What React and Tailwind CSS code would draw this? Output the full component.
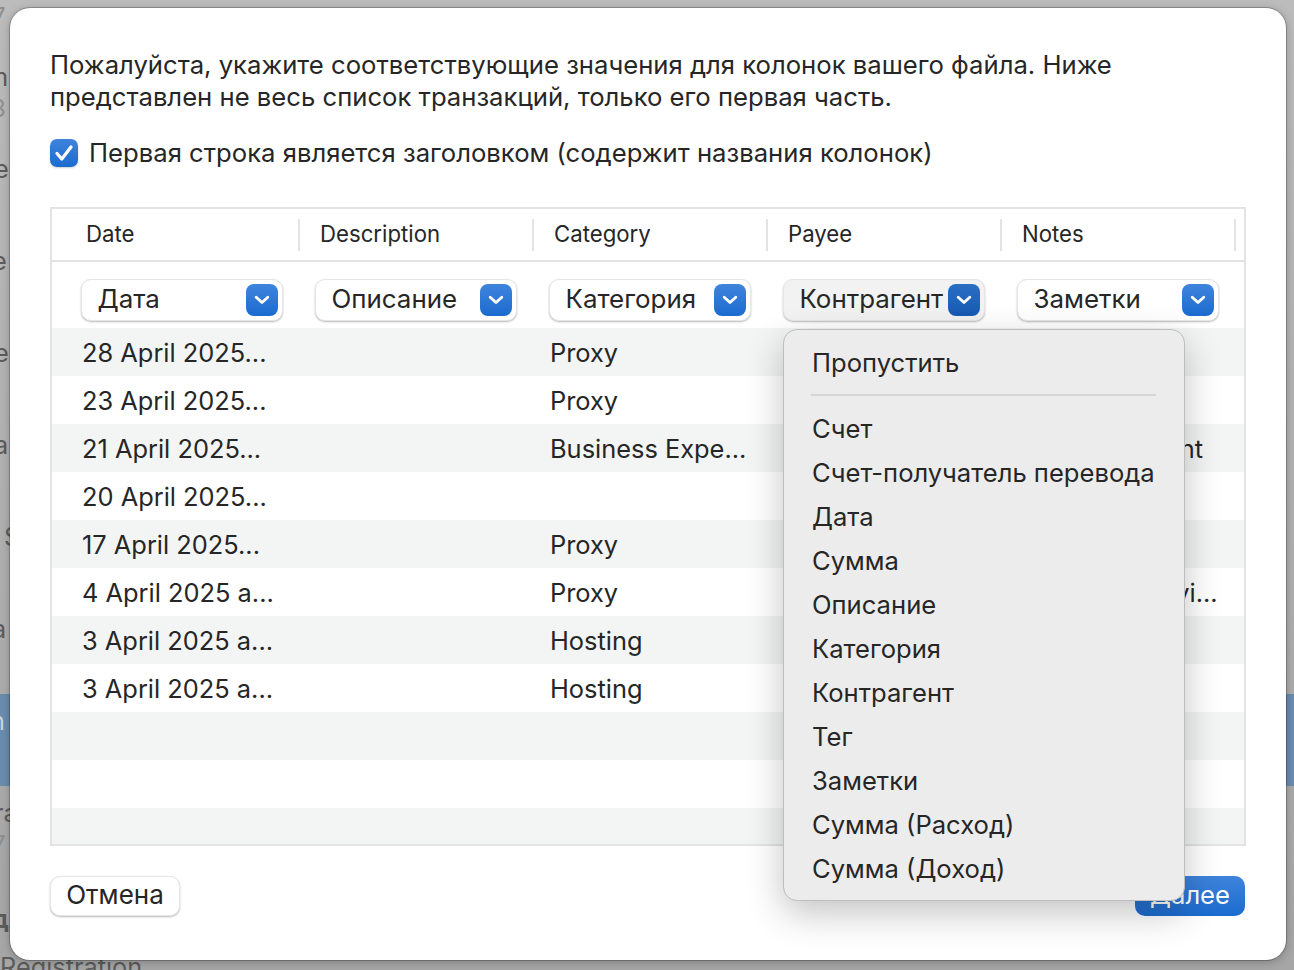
import React from "react";

const Chevron = () => (
  <svg width="16" height="10" viewBox="0 0 16 10" fill="none">
    <path d="M2.2 2.2 8 7.6l5.8-5.4" stroke="white" strokeWidth="2.8" strokeLinecap="round" strokeLinejoin="round" />
  </svg>
);

function Select({ label, active, children }) {
  return (
    <div className={`relative w-[202px] h-[42px] rounded-[10px] flex items-center pl-[17px] text-[25.9px] leading-[32px] text-[#262626] border border-[#e6e6e6] shadow-[0_1px_2px_rgba(0,0,0,0.28)] ${active ? "bg-[#f2f2f2]" : "bg-white"}`}>
      <span className="whitespace-nowrap -ml-[1.5px] pb-[2px]">{label}</span>
      <span className={`absolute right-[4px] top-[4px] w-[32px] h-[32px] rounded-[8px] flex items-center justify-center ${active ? "bg-gradient-to-b from-[#2a6fc4] to-[#1559b2]" : "bg-gradient-to-b from-[#3e84dc] to-[#1a6bcf]"}`}>
        <Chevron />
      </span>
      {children}
    </div>
  );
}

const menuItems = ["Счет", "Счет-получатель перевода", "Дата", "Сумма", "Описание", "Категория", "Контрагент", "Тег", "Заметки", "Сумма (Расход)", "Сумма (Доход)"];

function Menu() {
  return (
    <div className="absolute z-20 left-[-1px] top-[49px] w-[402px] h-[572px] bg-[#ececec] rounded-[14px] border border-[#bdbdbd] shadow-[0_12px_36px_rgba(0,0,0,0.24)] pt-[11px] text-[25.6px] text-[#262626]">
      <div className="h-[44px] leading-[44px] pl-[28px] whitespace-nowrap">Пропустить</div>
      <div className="h-[2px] bg-[#d5d5d5] mt-[9px] mb-[11px] ml-[27px] mr-[28px]" />
      {menuItems.map((m) => (
        <div key={m} className="h-[44px] leading-[44px] pl-[28px] whitespace-nowrap">{m}</div>
      ))}
    </div>
  );
}

const rows = [
  ["28 April 2025...", "Proxy", ""],
  ["23 April 2025...", "Proxy", ""],
  ["21 April 2025...", "Business Expe...", "Media payment"],
  ["20 April 2025...", "", ""],
  ["17 April 2025...", "Proxy", ""],
  ["4 April 2025 a...", "Proxy", "Proxy tos servi..."],
  ["3 April 2025 a...", "Hosting", ""],
  ["3 April 2025 a...", "Hosting", ""],
  ["", "", ""],
  ["", "", ""],
  ["", "", ""],
];

const headers = ["Date", "Description", "Category", "Payee", "Notes"];

const backRows = [
  { title: "", sub: "7", subShift: "-ml-[8px]" },
  { title: "m", sub: "8", shift: "-ml-[14px]", subShift: "-ml-[9px]" },
  { title: "e", shift: "-ml-[6px]" },
  { title: "e", shift: "-ml-[8px]" },
  { title: "e", shift: "-ml-[6px]" },
  { title: "a", shift: "-ml-[6px]" },
  { title: "S", shift: "ml-[4px]" },
  { title: "a", shift: "-ml-[8px]" },
  { title: "n", shift: "-ml-[10px]", blue: true },
  { title: "ra", sub: "7", shift: "-ml-[6px]", subShift: "-ml-[8px]" },
];

function BackRow({ title, sub, shift, subShift, blue }) {
  return (
    <div className={`h-[92px] shrink-0 pt-[11px] text-[25.3px] leading-[32px] whitespace-nowrap ${blue ? "bg-[#6a8cae] text-[#c9d5e1]" : "text-[#5c5c5c]"}`}>
      <div className={`h-[32px] ${shift || ""}`}>{title}</div>
      <div className={`h-[32px] text-[24px] text-[#8f8f8f] ${subShift || ""}`}>{sub}</div>
    </div>
  );
}

export default function App() {
  return (
    <div className="relative w-[1294px] h-[970px] overflow-hidden bg-gradient-to-b from-[#bcbcbc] to-[#a6a6a6] [font-family:Inter,'Noto_Sans',sans-serif]">
      {/* dimmed window behind the dialog */}
      <div className="absolute inset-0 flex flex-col -mt-[42px] overflow-hidden">
        {backRows.map((r, i) => (
          <BackRow key={i} {...r} />
        ))}
        <div className="border-t border-[#a9a9a9] pt-[24px] text-[25.3px] leading-[32px] text-[#5c5c5c]">
          <div className="-ml-[8px] font-bold h-[48px]">д</div>
          <div>Registration</div>
        </div>
      </div>

      {/* dialog */}
      <div className="relative z-10 ml-[10px] mt-[8px] w-[1276px] h-[952px] bg-white rounded-[20px] shadow-[0_0_0_1px_rgba(0,0,0,0.22),0_2px_10px_rgba(0,0,0,0.25)] pt-[41px] pl-[40px] pr-[40px]">
        <p className="text-[25.66px] leading-[32px] text-[#262626] w-[1196px] whitespace-nowrap">
          Пожалуйста, укажите соответствующие значения для колонок вашего файла. Ниже<br />
          представлен не весь список транзакций, только его первая часть.
        </p>

        <div className="flex items-center mt-[24px] h-[32px]">
          <span className="w-[28px] h-[28px] rounded-[7px] bg-gradient-to-b from-[#3e84dc] to-[#1a6bcf] shadow-[0_1px_2px_rgba(0,0,0,0.2)] flex items-center justify-center">
            <svg width="20" height="18" viewBox="0 0 20 18" fill="none">
              <path d="M3 9.5 7.8 15 17 3" stroke="white" strokeWidth="3.2" strokeLinecap="round" strokeLinejoin="round" />
            </svg>
          </span>
          <span className="ml-[11px] text-[25.66px] leading-[32px] text-[#262626] whitespace-nowrap">
            Первая строка является заголовком (содержит названия колонок)
          </span>
        </div>

        {/* table */}
        <div className="mt-[38px] w-[1196px] h-[639px] border-2 border-[#e3e3e3] relative">
          <div className="flex h-[53px] border-b-2 border-[#e3e3e3] items-center">
            {headers.map((h, i) => (
              <div key={h} className={`h-[32px] flex items-center border-r-2 border-[#e3e3e3] text-[22.2px] text-[#262626] pb-[2px] ${i === 0 ? "w-[248px] pl-[34px]" : "w-[234px] pl-[20px]"}`}>
                {h}
              </div>
            ))}
          </div>
          <div className="flex h-[66px] items-start pt-[17px]">
            <div className="w-[248px] pl-[29px]"><Select label="Дата" /></div>
            <div className="w-[234px] pl-[15px]"><Select label="Описание" /></div>
            <div className="w-[234px] pl-[15px]"><Select label="Категория" /></div>
            <div className="w-[234px] pl-[15px]"><Select label="Контрагент" active><Menu /></Select></div>
            <div className="w-[234px] pl-[15px]"><Select label="Заметки" /></div>
          </div>
          {rows.map((r, i) => (
            <div key={i} className={`flex items-center text-[25.4px] text-[#262626] whitespace-nowrap pt-[2px] ${i === 10 ? "h-[36px]" : "h-[48px]"} ${i % 2 === 0 ? "bg-[#f3f5f5]" : "bg-white"}`}>
              <div className="w-[248px] pl-[30px]">{r[0]}</div>
              <div className="w-[234px]" />
              <div className="w-[234px] pl-[16px]">{r[1]}</div>
              <div className="w-[234px]" />
              <div className="w-[234px] pl-[16px]">{r[2]}</div>
            </div>
          ))}
        </div>

        {/* footer */}
        <div className="flex justify-between mt-[30px] pr-px">
          <button className="w-[130px] h-[40px] bg-white rounded-[10px] border border-[#e6e6e6] shadow-[0_1px_2px_rgba(0,0,0,0.28)] text-[26px] leading-[32px] text-[#262626] pb-[2px]">Отмена</button>
          <button className="w-[110px] h-[40px] rounded-[10px] bg-gradient-to-b from-[#3e84dc] to-[#1a6bcf] text-[25.6px] leading-[32px] text-white pb-[2px]">Далее</button>
        </div>
      </div>
    </div>
  );
}
